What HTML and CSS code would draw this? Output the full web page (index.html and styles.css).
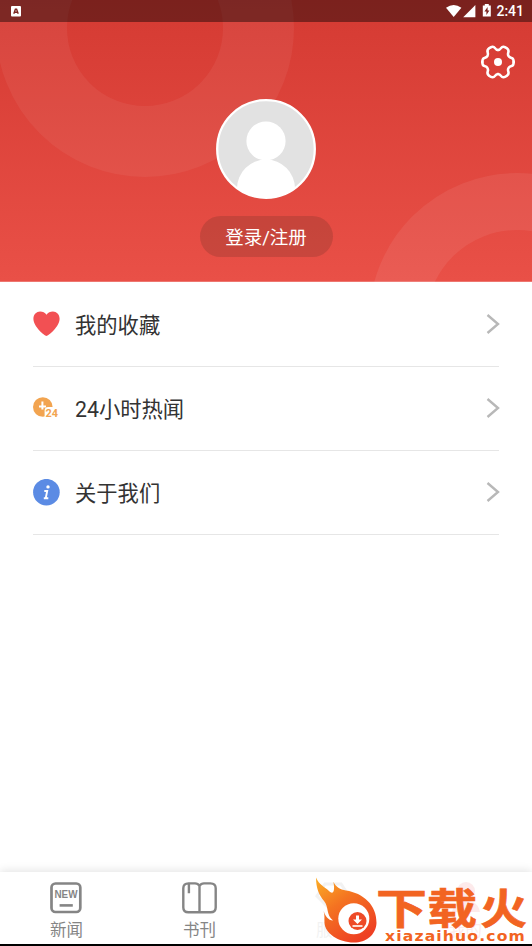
FILE: index.html
```html
<!DOCTYPE html>
<html lang="zh-CN">
<head>
<meta charset="utf-8">
<title>我的</title>
<link rel="stylesheet" href="styles.css">
</head>
<body>
<div class="app">
  <header class="hero">
    <svg class="rings" viewBox="0 0 532 282" fill="none" stroke="#fff">
      <circle cx="145" cy="28" r="113.5" stroke-width="71" stroke-opacity=".055"/>
      <circle cx="517" cy="321" r="119.5" stroke-width="57" stroke-opacity=".07"/>
    </svg>
    <div class="status">
      <svg width="10" height="11" viewBox="0 0 10 11"><rect width="10" height="10.5" rx="1" fill="#fff"/><path d="M2.8 7.8 4.4 3.2h1.2l1.6 4.6M3.5 6.2h3" fill="none" stroke="#7d2520" stroke-width="1.4"/></svg>
      <div class="status-right">
        <svg width="48" height="14" viewBox="0 0 48 14" fill="#fff"><path d="M0 3.8Q7.7-1.8 15.4 3.8L7.7 13z"/><path d="M29.4 1v12.2H17.2z"/><path fill-rule="evenodd" d="M38.8 0h4v1.4h2V12.4h-8V1.4h2zM41.6 3l-3.2 4.4h2V11l3-4.6h-1.8z"/></svg>
        <span class="time">2:41</span>
      </div>
    </div>
    <svg class="gear" width="36" height="36" viewBox="-18 -18 36 36">
      <defs><path id="quarter" d="M16.5 0Q16.5 3.8 14.3 4.3Q11.8 4.87 11 6.4Q10.1 8 10.9 10.2Q11.7 12.6 9.4 14.4Q5.2 17.6 3.4 14.9Q1.81 12.6 0 12.6"/></defs>
      <g fill="none" stroke="#fff" stroke-width="2.7" stroke-linecap="round" transform="scale(.95)"><use href="#quarter"/><use href="#quarter" transform="scale(-1 1)"/><use href="#quarter" transform="scale(1 -1)"/><use href="#quarter" transform="scale(-1 -1)"/></g>
      <circle r="4" fill="#fff"/>
    </svg>
    <svg class="avatar" width="100" height="100" viewBox="0 0 100 100">
      <defs><clipPath id="disc"><circle cx="50" cy="50" r="49"/></clipPath></defs>
      <circle cx="50" cy="50" r="48.8" fill="#e2e2e2"/>
      <g fill="#fff" clip-path="url(#disc)"><circle cx="50" cy="42" r="19.6"/><circle cx="50" cy="89.5" r="29"/></g>
      <circle cx="50" cy="50" r="48.8" fill="none" stroke="#fff" stroke-width="2.3"/>
    </svg>
    <div class="login">登录/注册</div>
  </header>

  <main class="menu">
    <div class="row">
      <svg class="icon" width="27" height="27" viewBox="0 0 27 27"><path fill="#f25053" d="M13.5 25C11.5 25 .4 15.5.4 7.8.4 3.7 3.5.6 7.1.6c2.7 0 4.8 1.2 6.4 3.2 1.6-2 3.7-3.2 6.4-3.2 3.6 0 6.7 3.1 6.7 7.2C26.6 15.5 15.5 25 13.5 25z"/></svg>
      <span class="label">我的收藏</span>
      <svg class="chevron" width="14" height="20" viewBox="0 0 14 20"><path d="M1.500 1 12 10 1.500 19"/></svg>
    </div>
    <div class="row">
      <svg class="icon" width="27" height="27" viewBox="0 0 27 27"><circle cx="9.800" cy="12" r="9.800" fill="#f2a450"/><path d="M9.400 6.500v8M6 11.500h7" stroke="#fff" stroke-width="2" fill="none"/><path d="M11.600 23V15.500q0-3.500 3.500-3.500h9v11z" fill="#fff"/><text class="badge-text" x="12.500" y="22.300" textLength="12.500" lengthAdjust="spacingAndGlyphs">24</text></svg>
      <span class="label">24小时热闻</span>
      <svg class="chevron" width="14" height="20" viewBox="0 0 14 20"><path d="M1.500 1 12 10 1.500 19"/></svg>
    </div>
    <div class="row">
      <svg class="icon" width="27" height="27" viewBox="0 0 27 27"><circle cx="13.4" cy="13.2" r="13.3" fill="#5b8be4"/><circle cx="15" cy="7.9" r="1.7" fill="#fff"/><path d="M11.3 12h2.9l-1.5 7.3h2.6M10.8 19.3h2" fill="none" stroke="#fff" stroke-width="1.9"/></svg>
      <span class="label">关于我们</span>
      <svg class="chevron" width="14" height="20" viewBox="0 0 14 20"><path d="M1.500 1 12 10 1.500 19"/></svg>
    </div>
  </main>

  <nav class="tabs">
    <div class="tab">
      <svg width="36" height="34" viewBox="0 0 36 34"><rect x="2.5" y="2.5" width="28.8" height="28.5" rx="4" fill="none" stroke="#858585" stroke-width="2.7"/><text class="new-text" x="5.5" y="17.2" textLength="23" lengthAdjust="spacingAndGlyphs">NEW</text><path d="M10.6 24.4h13.2" stroke="#858585" stroke-width="2.6"/></svg>
      <span>新闻</span>
    </div>
    <div class="tab">
      <svg width="36" height="34" viewBox="0 0 36 34" fill="none" stroke="#858585" stroke-width="2.4"><path d="M17.5 5Q16 2.4 13 2.4H6.5Q1.3 2.4 1.3 7.3V26.5Q1.3 31.3 6.5 31.3H28.5Q33.7 31.3 33.7 26.5V7.3Q33.7 2.4 28.5 2.4H22Q19 2.4 17.5 5zV31M6.9 3v9.2"/></svg>
      <span>书刊</span>
    </div>
    <div class="tab faded">
      <svg width="36" height="34" viewBox="0 0 36 34" fill="none" stroke="#858585" stroke-width="3"><path d="M10 3h16l8 12-16 16L2 15z"/><path d="m10 14 8 8 9-9"/></svg>
      <span>服务</span>
    </div>
    <div class="tab faded mine">
      <svg width="36" height="34" viewBox="0 0 36 34" fill="#ef3f43"><circle cx="18" cy="10" r="9"/><path d="M4 31q2-11 14-11t14 11z"/></svg>
      <span>我的</span>
    </div>
    <svg class="brand" width="220" height="71" viewBox="0 0 220 71">
      <defs>
        <linearGradient id="flame" x1="0" y1="0" x2=".65" y2="1"><stop offset="0" stop-color="#fbae26"/><stop offset=".45" stop-color="#f47321"/><stop offset="1" stop-color="#ee4023"/></linearGradient>
      </defs>
      <path fill="url(#flame)" d="M4 4.5C7 12 13 14 17 18C22 23 23 16 21.3 8.7C24 14 28 16.5 34 17.5C51 20 65 32 64.5 50C64 62 54 69.5 42 69.5C26 69.5 13 60 12.5 50C12.2 45 13 42 11.5 38C14 44 16 47 21 47.5C14 42 17 34 12 28C7 22 4 15 4 4.5z"/>
      <circle cx="41.8" cy="45.8" r="15.5" fill="#fff"/>
      <circle cx="45.5" cy="48" r="9" fill="#ee4a27"/>
      <path d="M44 42.5h3v4h3l-4.5 4.5-4.5-4.5h3z" fill="#fff"/><path d="M40.5 53h10" stroke="#fff" stroke-width="1.6"/>
      <g fill="#f26422">
        <text class="brand-name" x="64" y="51" textLength="51" lengthAdjust="spacingAndGlyphs">下</text>
        <text class="brand-name" x="115" y="51" textLength="50" lengthAdjust="spacingAndGlyphs">载</text>
        <text class="brand-name" x="168" y="51" textLength="47" lengthAdjust="spacingAndGlyphs">火</text>
        <text class="brand-url" x="73" y="68" textLength="141" lengthAdjust="spacingAndGlyphs">xiazaihuo.com</text>
      </g>
    </svg>
  </nav>
</div>
</body>
</html>
```

FILE: styles.css
```css
* { box-sizing: border-box; }

body {
  margin: 0;
  background: #fff;
  font-family: Roboto, "Noto Sans CJK SC", sans-serif;
}

svg { display: block; flex: none; }

.app {
  height: 946px;
  display: flex;
  flex-direction: column;
  overflow: hidden;
}

.hero {
  position: relative;
  height: 282px;
  flex: none;
  display: flex;
  flex-direction: column;
  align-items: center;
  background: linear-gradient(#d43a33 0, #d63c34 22px, #e95047 281px);
  border-bottom: 1px solid #ee7770;
}

.rings { position: absolute; inset: 0; width: 532px; height: 282px; }

.status {
  position: relative;
  width: 100%;
  height: 22px;
  flex: none;
  padding: 0 8px 0 11px;
  display: flex;
  align-items: center;
  justify-content: space-between;
  background: rgba(0, 0, 0, .42);
}

.status-right { display: flex; align-items: center; gap: 2px; }
.time { color: #fff; font-size: 14px; line-height: 22px; font-weight: 500; }

.gear { position: relative; align-self: flex-end; margin: 22px 16px 0 0; }

.avatar { position: relative; margin-top: 19px; }

.login {
  position: relative;
  width: 133px;
  height: 41px;
  margin-top: 17px;
  border-radius: 21px;
  background: rgba(60, 40, 30, .18);
  color: #fff;
  font-size: 18.5px;
  line-height: 45px;
  text-align: center;
}

.menu { flex: 1; padding: 1px 33px 0; }

.row {
  height: 84px;
  display: flex;
  align-items: center;
  border-bottom: 1px solid #e6e6e6;
}

.label { margin-left: 15px; flex: 1; color: #333; font-size: 21.3px; line-height: 30px; padding-top: 3px; }

.chevron { fill: none; stroke: #b8b8b8; stroke-width: 2.4; margin: 0 -1px 2px 0; }

.badge-text { font: bold 11px Roboto, sans-serif; fill: #f2a450; }

.tabs {
  position: relative;
  height: 74px;
  flex: none;
  display: flex;
  background: #fff;
  border-bottom: 2px solid #000;
  box-shadow: 0 -1px 9px rgba(0, 0, 0, .12);
}

.tab {
  flex: 1;
  padding-top: 9px;
  display: flex;
  flex-direction: column;
  align-items: center;
  color: #858585;
  font-size: 16.5px;
  line-height: 24px;
}

.tab span { margin-top: 4px; }
.faded { opacity: .1; }
.mine { color: #ef3f43; }
.new-text { font: bold 10px "Liberation Sans", sans-serif; fill: #858585; }

.brand { position: absolute; left: 312px; top: 1px; }
.brand-name { font: 700 42px "Noto Sans CJK SC", sans-serif; stroke: #f26422; stroke-width: .6; }
.brand-url { font: bold 13.5px "DejaVu Sans", sans-serif; letter-spacing: 1px; }
```
